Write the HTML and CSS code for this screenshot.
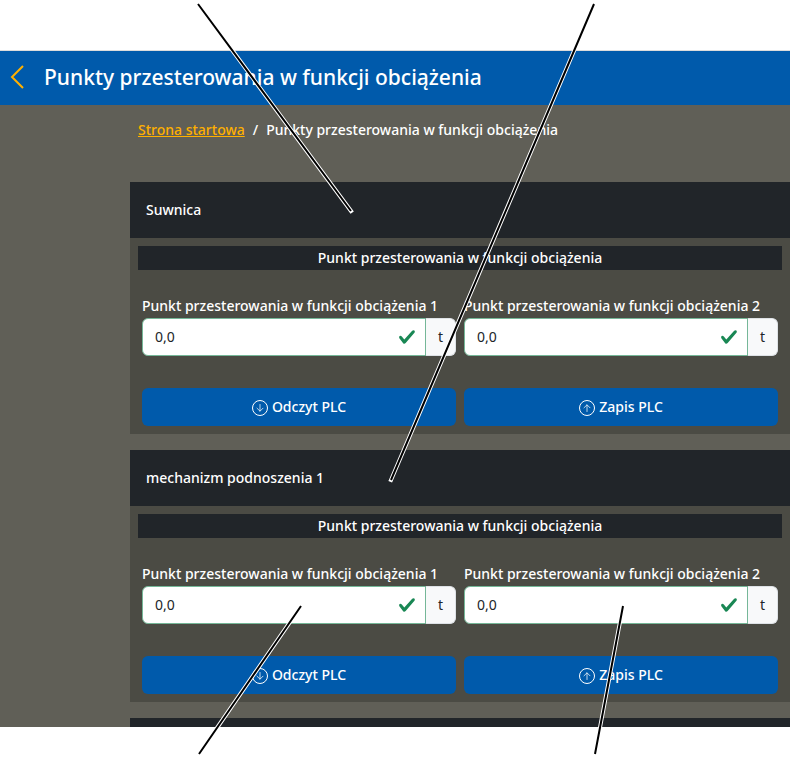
FILE: index.html
```html
<!DOCTYPE html>
<html lang="pl">
<head>
<meta charset="utf-8">
<meta name="viewport" content="width=device-width, initial-scale=1">
<title>Punkty przesterowania w funkcji obciążenia</title>
<link rel="stylesheet" href="styles.css">
</head>
<body>
<svg class="symbols" aria-hidden="true">
  <symbol id="check" viewBox="0 0 8 8"><path fill="#198754" d="M2.3 6.73.6 4.53c-.4-1.04.46-1.4 1.1-.8l1.1 1.4 3.4-3.8c.6-.63 1.6-.27 1.2.7l-4 4.6c-.43.5-.8.4-1.1.1z"/></symbol>
  <symbol id="down" viewBox="0 0 16 16"><circle cx="8" cy="8" r="7.5" fill="none" stroke="currentColor"/><path fill="none" stroke="currentColor" stroke-opacity=".75" stroke-linecap="round" stroke-linejoin="round" d="M8 4.500v6.500M5 8.200l3 3 3-3"/></symbol>
  <symbol id="up" viewBox="0 0 16 16"><circle cx="8" cy="8" r="7.5" fill="none" stroke="currentColor"/><path fill="none" stroke="currentColor" stroke-opacity=".75" stroke-linecap="round" stroke-linejoin="round" d="M8 11.500V5M5 7.800l3-3 3 3"/></symbol>
</svg>
<div class="figure">
  <div class="screen">
    <header class="topbar">
      <a class="back" href="#" aria-label="Wstecz"><svg viewBox="0 0 14 24" fill="none" stroke="#ffb000" stroke-width="2"><path d="M13 1 2 12l11 11"/></svg></a>
      <h1>Punkty przesterowania w funkcji obciążenia</h1>
    </header>
    <main class="content">
      <nav class="breadcrumb"><a href="#">Strona startowa</a><span>/</span><span>Punkty przesterowania w funkcji obciążenia</span></nav>

      <section class="card">
        <h2>Suwnica</h2>
        <form class="card-body">
          <h3>Punkt przesterowania w funkcji obciążenia</h3>
          <div class="grid">
            <div class="field">
              <label for="a1">Punkt przesterowania w funkcji obciążenia 1</label>
              <div class="group"><input id="a1" type="text" value="0,0"><svg class="valid"><use href="#check"/></svg><span class="unit">t</span></div>
            </div>
            <div class="field">
              <label for="a2">Punkt przesterowania w funkcji obciążenia 2</label>
              <div class="group"><input id="a2" type="text" value="0,0"><svg class="valid"><use href="#check"/></svg><span class="unit">t</span></div>
            </div>
            <button type="button"><svg><use href="#down"/></svg>Odczyt PLC</button>
            <button type="button"><svg><use href="#up"/></svg>Zapis PLC</button>
          </div>
        </form>
      </section>

      <section class="card">
        <h2>mechanizm podnoszenia 1</h2>
        <form class="card-body">
          <h3>Punkt przesterowania w funkcji obciążenia</h3>
          <div class="grid">
            <div class="field">
              <label for="b1">Punkt przesterowania w funkcji obciążenia 1</label>
              <div class="group"><input id="b1" type="text" value="0,0"><svg class="valid"><use href="#check"/></svg><span class="unit">t</span></div>
            </div>
            <div class="field">
              <label for="b2">Punkt przesterowania w funkcji obciążenia 2</label>
              <div class="group"><input id="b2" type="text" value="0,0"><svg class="valid"><use href="#check"/></svg><span class="unit">t</span></div>
            </div>
            <button type="button"><svg><use href="#down"/></svg>Odczyt PLC</button>
            <button type="button"><svg><use href="#up"/></svg>Zapis PLC</button>
          </div>
        </form>
      </section>

      <div class="card-edge"></div>
    </main>
  </div>
  <svg class="callouts" viewBox="0 0 790 758" aria-hidden="true">
    <path class="halo" d="M198 4 351 211M594 4 391 480M301 606 199 754M623 606 595 754"/>
    <path class="line" d="M198 4 351 211M594 4 391 480M301 606 199 754M623 606 595 754"/>
  </svg>
</div>
</body>
</html>
```

FILE: styles.css
```css
* { box-sizing: border-box; }

body {
  margin: 0;
  background: #fff;
  color: #fff;
  font: 500 14px/24px "Noto Sans", sans-serif;
}

h1, h2, h3 { margin: 0; font-weight: 500; }

.symbols { display: none; }

.figure {
  position: relative;
  padding: 50px 0 31px;
}

.screen {
  background: #605f57;
  border-top: 1px solid #dcdcdc;
}

.topbar {
  display: flex;
  align-items: center;
  gap: 20px;
  padding: 8px 10px 10px;
  background: #005aab;
}

.topbar h1 { font-size: 21px; line-height: 36px; }

.back { display: flex; }
.back svg { width: 14px; height: 24px; }

.content { padding: 13px 0 0 130px; }

.breadcrumb {
  display: flex;
  gap: 8px;
  padding: 0 8px;
  margin-bottom: 40px;
}

.breadcrumb a { color: #ffb000; }

.card {
  margin-bottom: 16px;
  background: #4b4b44;
}

.card h2 {
  padding: 16px;
  background: #212529;
  font-size: 14px;
  line-height: 24px;
}

.card-body { padding: 8px; }

.card h3 {
  background: #212529;
  font-size: 14px;
  line-height: 24px;
  text-align: center;
}

.grid {
  display: grid;
  grid-template-columns: repeat(2, minmax(0, 1fr));
  gap: 32px 8px;
  padding: 24px 4px 0;
}

label { display: block; white-space: nowrap; }

.group {
  position: relative;
  display: flex;
  height: 38px;
}

input {
  flex: 1;
  min-width: 0;
  padding: 0 12px;
  border: 1px solid #75b798;
  border-radius: 6px 0 0 6px;
  background: #fff;
  color: #212529;
  font: inherit;
  font-weight: 400;
}

.valid {
  position: absolute;
  top: 10px;
  right: 40px;
  width: 18px;
  height: 18px;
}

.unit {
  width: 30px;
  line-height: 36px;
  border: 1px solid #dee2e6;
  border-left: 0;
  border-radius: 0 6px 6px 0;
  background: #f8f9fa;
  color: #212529;
  font-weight: 400;
  text-align: center;
}

button {
  display: flex;
  align-items: center;
  justify-content: center;
  gap: 4px;
  height: 38px;
  padding: 0;
  border: 0;
  border-radius: 6px;
  background: #005aab;
  color: #fff;
  font: inherit;
}

button svg { width: 16px; height: 16px; margin-top: 2px; }

.card-edge { height: 9px; background: #212529; }

.callouts {
  position: absolute;
  top: 0;
  left: 0;
  width: 100%;
  pointer-events: none;
}

.halo { fill: none; stroke: #fff; stroke-width: 4; stroke-linecap: square; }
.line { fill: none; stroke: #000; stroke-width: 2; }
```
